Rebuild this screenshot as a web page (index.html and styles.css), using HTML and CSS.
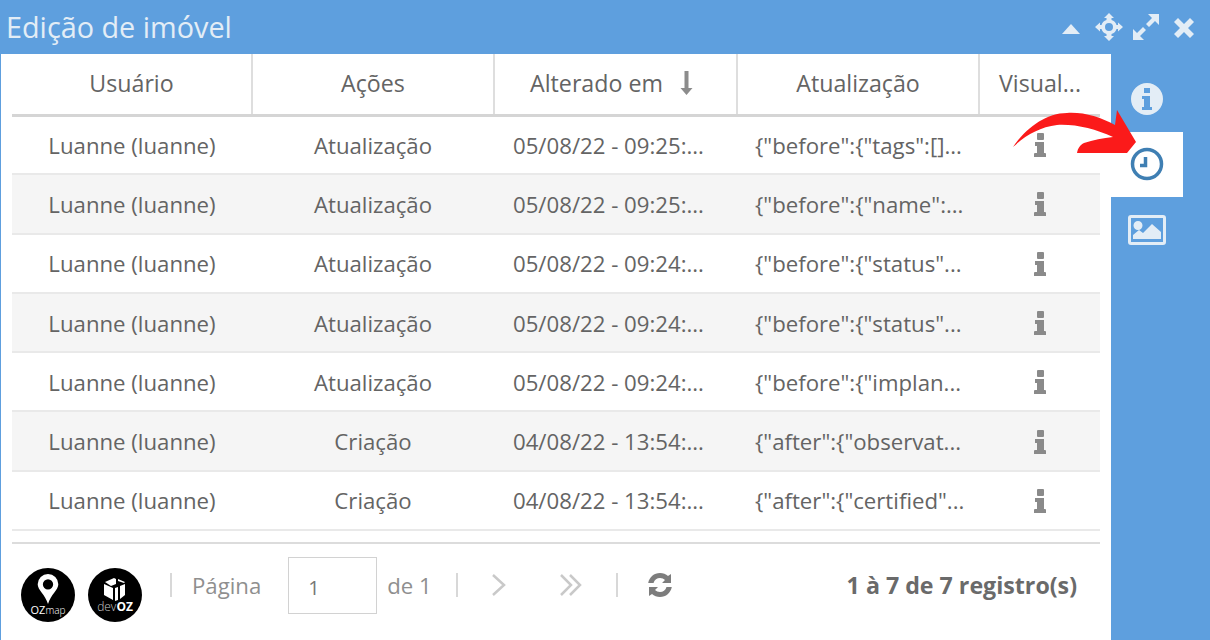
FILE: index.html
```html
<!DOCTYPE html>
<html lang="en">
  <head>
    <meta charset="UTF-8" />
    <meta name="viewport" content="width=device-width, initial-scale=1.0" />
    <title>Edição de imóvel</title>
    <link rel="stylesheet" href="styles.css">
  </head>
  <body>
    <svg class="defs" width="0" height="0">
      <symbol id="iconInfo" viewBox="0 0 12 24">
        <path d="M3 1a1 1 0 0 1 1-1h5a1 1 0 0 1 1 1v5a1 1 0 0 1-1 1H4a1 1 0 0 1-1-1zM1 9h9v11h1a1 1 0 0 1 1 1v3H0v-3a1 1 0 0 1 1-1h2v-7H1z" />
      </symbol>
    </svg>

    <div class="window">
      <header class="titlebar">
        <h1 class="title">Edição de imóvel</h1>
        <div class="window-actions">
          <svg class="action action-collapse" width="20" height="12" viewBox="0 0 20 12"><path d="M10 1l9 10H1z" /></svg>
          <svg class="action action-move" width="28" height="28" viewBox="0 0 28 28"><path fill-rule="evenodd" d="M14 0l5 5h-2.500v2a7.500 7.500 0 0 1 5 5H23v-2.500l5 4.500-5 4.500V16h-1.500a7.500 7.500 0 0 1-5 5v2H19l-5 5-5-5h2.500v-2a7.500 7.500 0 0 1-5-5H5v2.500L0 14l5-4.500V12h1.500a7.500 7.500 0 0 1 5-5V5H9zM14 10a4 4 0 1 0 0 8 4 4 0 0 0 0-8z" /></svg>
          <svg class="action action-expand" width="28" height="28" viewBox="0 0 28 28"><path d="M16 1h11v11l-4-4-6 6-3-3 6-6zM12 27H1V16l4 4 6-6 3 3-6 6z" /></svg>
          <svg class="action action-close" width="22" height="22" viewBox="0 0 22 22"><path d="M5 1l6 6 6-6 4 4-6 6 6 6-4 4-6-6-6 6-4-4 6-6-6-6z" /></svg>
        </div>
      </header>

      <div class="content">
        <main class="panel">
          <table class="history">
            <thead>
              <tr>
                <th>Usuário</th>
                <th>Ações</th>
                <th class="sorted">
                  Alterado em
                  <svg class="sort" width="13" height="24" viewBox="0 0 13 24"><path d="M4.500 0h4v17h4l-6 7-6-7h4z" /></svg>
                </th>
                <th>Atualização</th>
                <th>Visual...</th>
              </tr>
            </thead>
            <tbody>
              <tr>
                <td>Luanne (luanne)</td>
                <td>Atualização</td>
                <td>05/08/22 - 09:25:...</td>
                <td>{"before":{"tags":[]...</td>
                <td><svg class="row-icon"><use href="#iconInfo" /></svg></td>
              </tr>
              <tr>
                <td>Luanne (luanne)</td>
                <td>Atualização</td>
                <td>05/08/22 - 09:25:...</td>
                <td>{"before":{"name":...</td>
                <td><svg class="row-icon"><use href="#iconInfo" /></svg></td>
              </tr>
              <tr>
                <td>Luanne (luanne)</td>
                <td>Atualização</td>
                <td>05/08/22 - 09:24:...</td>
                <td>{"before":{"status"...</td>
                <td><svg class="row-icon"><use href="#iconInfo" /></svg></td>
              </tr>
              <tr>
                <td>Luanne (luanne)</td>
                <td>Atualização</td>
                <td>05/08/22 - 09:24:...</td>
                <td>{"before":{"status"...</td>
                <td><svg class="row-icon"><use href="#iconInfo" /></svg></td>
              </tr>
              <tr>
                <td>Luanne (luanne)</td>
                <td>Atualização</td>
                <td>05/08/22 - 09:24:...</td>
                <td>{"before":{"implan...</td>
                <td><svg class="row-icon"><use href="#iconInfo" /></svg></td>
              </tr>
              <tr>
                <td>Luanne (luanne)</td>
                <td>Criação</td>
                <td>04/08/22 - 13:54:...</td>
                <td>{"after":{"observat...</td>
                <td><svg class="row-icon"><use href="#iconInfo" /></svg></td>
              </tr>
              <tr>
                <td>Luanne (luanne)</td>
                <td>Criação</td>
                <td>04/08/22 - 13:54:...</td>
                <td>{"after":{"certified"...</td>
                <td><svg class="row-icon"><use href="#iconInfo" /></svg></td>
              </tr>
            </tbody>
          </table>

          <footer class="pager">
            <div class="logo">
              <svg width="24" height="30" viewBox="0 0 24 32"><path fill-rule="evenodd" d="M12 0a11 11 0 0 1 11 11c0 6-8 11-11 21C9 22 1 17 1 11A11 11 0 0 1 12 0zm0 5.500a5.500 5.500 0 1 0 0 11 5.500 5.500 0 0 0 0-11z" /></svg>
              <span class="logo-text">OZ<small>map</small></span>
            </div>
            <div class="logo">
              <svg width="24" height="24" viewBox="0 0 24 24"><path d="M2 5l9-4 2 1v5l-5 2zM15 2l7 3-1 1-6-2zM1 7l9 4v12l-9-5zM12 11l3-1v13l-3 1zM17 9l5-2v11l-5 4z" /></svg>
              <span class="logo-text logo-dev">dev<b>OZ</b></span>
            </div>
            <span class="divider divider-first"></span>
            <span class="page-label">Página</span>
            <input class="page-input" type="text" value="1" />
            <span class="page-label">de 1</span>
            <span class="divider divider-second"></span>
            <svg class="nav-next" width="16" height="24" viewBox="0 0 16 24"><path d="M2 2l11 10-11 10" /></svg>
            <svg class="nav-last" width="24" height="24" viewBox="0 0 24 24"><path d="M2 2l10 10-10 10M11 2l10 10-10 10" /></svg>
            <span class="divider divider-third"></span>
            <svg class="refresh" width="26" height="26" viewBox="0 0 26 26"><path d="M13 1c3 0 6 1 8 3l3-2v9h-9l3-3c-1.300-1.200-3-2-5-2-3 0-5.500 1.800-6.500 5H1.200C2.400 5 7 1 13 1zM2 15h9l-3 3c1.300 1.200 3 2 5 2 3 0 5.500-1.800 6.500-5h5.300C23.600 21 19 25 13 25c-3 0-6-1-8-3l-3 2z" /></svg>
            <span class="total">1 à 7 de 7 registro(s)</span>
          </footer>
        </main>

        <nav class="tabs">
          <a class="tab">
            <svg width="34" height="34" viewBox="0 0 34 34"><path fill-rule="evenodd" d="M17 1a16 16 0 1 1 0 32 16 16 0 0 1 0-32zM14 6v5h6V6zM12 14v3h2v8h-2v3h10v-3h-2V14z" /></svg>
          </a>
          <a class="tab tab-active">
            <svg width="34" height="34" viewBox="0 0 34 34"><circle cx="17" cy="17" r="14.500" /><path d="M15.500 10v8.500H10" /></svg>
          </a>
          <a class="tab">
            <svg width="40" height="32" viewBox="0 0 40 32"><path fill-rule="evenodd" d="M4 1h32a3 3 0 0 1 3 3v24a3 3 0 0 1-3 3H4a3 3 0 0 1-3-3V4a3 3 0 0 1 3-3zm0 3v24h32V4zM11 7a4.500 4.500 0 1 1 0 9 4.500 4.500 0 0 1 0-9zM6 25v-4l6-5 4 3 9-9 9 8v7z" /></svg>
          </a>
        </nav>
      </div>
    </div>

    <svg class="callout" width="130" height="50" viewBox="1010 108 130 50">
      <path d="M1013 147C1026 128 1046 113 1067 113C1084 112 1100 117 1115 125L1117 110L1136 142L1127 153L1077 153C1078 148 1080 145 1084 143C1093 140 1103 138 1113 137C1095 129 1076 124 1057 125C1040 127 1026 135 1013 147Z" />
    </svg>
  </body>
</html>
```

FILE: styles.css
```css
* {
  box-sizing: border-box;
}

body {
  margin: 0;
  height: 640px;
  overflow: hidden;
  position: relative;
  font-family: "Open Sans", sans-serif;
  color: #646464;
  background-color: #5e9fde;
}

.defs {
  position: absolute;
}

.window {
  display: flex;
  flex-direction: column;
  height: 640px;
}

.titlebar {
  display: flex;
  align-items: center;
  justify-content: space-between;
  height: 54px;
  padding: 0 15px 0 6px;
}

.title {
  margin: 0 0 1px;
  font-size: 28.800px;
  font-weight: 400;
  color: #e3edf6;
}

.window-actions {
  display: flex;
  align-items: center;
  fill: #e3edf6;
}

.action-collapse {
  margin-top: 4px;
}

.action-move {
  margin-left: 14px;
}

.action-expand {
  margin-left: 9px;
}

.action-close {
  margin: 2px 0 0 13px;
}

.content {
  display: flex;
  flex: 1;
  padding-left: 1px;
}

.panel {
  display: flex;
  flex-direction: column;
  width: 1110px;
  padding: 0 11px 0 11px;
  background-color: #fff;
}

.history {
  width: 1088px;
  border-collapse: collapse;
  table-layout: fixed;
}

.history th {
  height: 61px;
  padding: 0 14px 1px;
  font-size: 23.200px;
  font-weight: 400;
  text-align: center;
  white-space: nowrap;
  border-right: 2px solid #dedede;
  border-bottom: 3px solid #d5d5d5;
}

.history th:nth-child(1),
.history td:nth-child(1) {
  width: 240px;
}

.history th:nth-child(2),
.history td:nth-child(2),
.history th:nth-child(4),
.history td:nth-child(4) {
  width: 242px;
}

.history th:nth-child(3),
.history td:nth-child(3) {
  width: 243px;
}

.history th.sorted {
  padding-right: 22px;
}

.history th:last-child {
  padding: 0 0 1px;
  border-right: none;
}

.history td {
  height: 59.300px;
  padding: 1px 18px 0;
  font-size: 22.200px;
  text-align: center;
  white-space: nowrap;
  border-bottom: 2px solid #e9e9e9;
}

.history td:nth-child(3) {
  padding-left: 19px;
  text-align: left;
}

.history td:nth-child(4) {
  padding-left: 18px;
  text-align: left;
}

.history tbody tr:nth-child(even) {
  background-color: #f5f5f5;
}

.sort {
  margin-left: 11px;
  vertical-align: -3px;
  fill: #8c8c8c;
}

.row-icon {
  display: block;
  width: 12px;
  height: 24px;
  margin: 0 auto;
  fill: #8a8a8a;
}

.pager {
  display: flex;
  align-items: center;
  height: 84px;
  margin-top: 11px;
  padding-left: 9px;
  border-top: 2px solid #dcdcdc;
}

.logo {
  display: flex;
  flex-direction: column;
  align-items: center;
  justify-content: center;
  flex: none;
  width: 54px;
  height: 54px;
  margin: 20px 13px 0 0;
  border-radius: 50%;
  background-color: #000;
  color: #fff;
  fill: #fff;
}

.logo-text {
  font-size: 11px;
  line-height: 12px;
  font-weight: 400;
}

.logo-text small {
  font-size: 10px;
  font-weight: 300;
}

.logo-dev {
  font-size: 12px;
  font-weight: 300;
  color: #c8c8c8;
}

.logo-dev b {
  color: #fff;
  font-weight: 700;
}

.divider {
  flex: none;
  width: 2px;
  height: 24px;
  background-color: #d8d8d8;
}

.divider-first {
  margin: 0 20px 0 15px;
}

.divider-second {
  margin: 0 33px 0 24px;
}

.divider-third {
  margin: 0 29px 0 33px;
}

.page-label {
  font-size: 22.200px;
  color: #8f8f8f;
}

.page-input {
  flex: none;
  width: 89px;
  height: 57px;
  margin: 0 10px 0 27px;
  padding: 4px 0 0 19px;
  font-family: inherit;
  font-size: 20px;
  color: #777;
  border: 1px solid #d2d2d2;
}

.nav-next,
.nav-last {
  flex: none;
  fill: none;
  stroke: #c9c9c9;
  stroke-width: 2.500;
}

.nav-last {
  margin-left: 52px;
}

.refresh {
  flex: none;
  fill: #7d7d7d;
}

.total {
  margin-left: auto;
  padding-right: 23px;
  font-size: 23.200px;
  font-weight: 700;
  color: #6a6a6a;
}

.tabs {
  display: flex;
  flex-direction: column;
  padding-top: 12px;
}

.tab {
  display: flex;
  align-items: center;
  justify-content: center;
  width: 72px;
  height: 66px;
  fill: #e3edf6;
}

.tab-active {
  height: 65px;
  background-color: #fff;
}

.tab-active svg {
  margin-top: -1px;
  fill: none;
  stroke: #3f7fb3;
  stroke-width: 3.500;
}

.callout {
  position: absolute;
  left: 1010px;
  top: 108px;
  fill: #fb1a1a;
}
```
